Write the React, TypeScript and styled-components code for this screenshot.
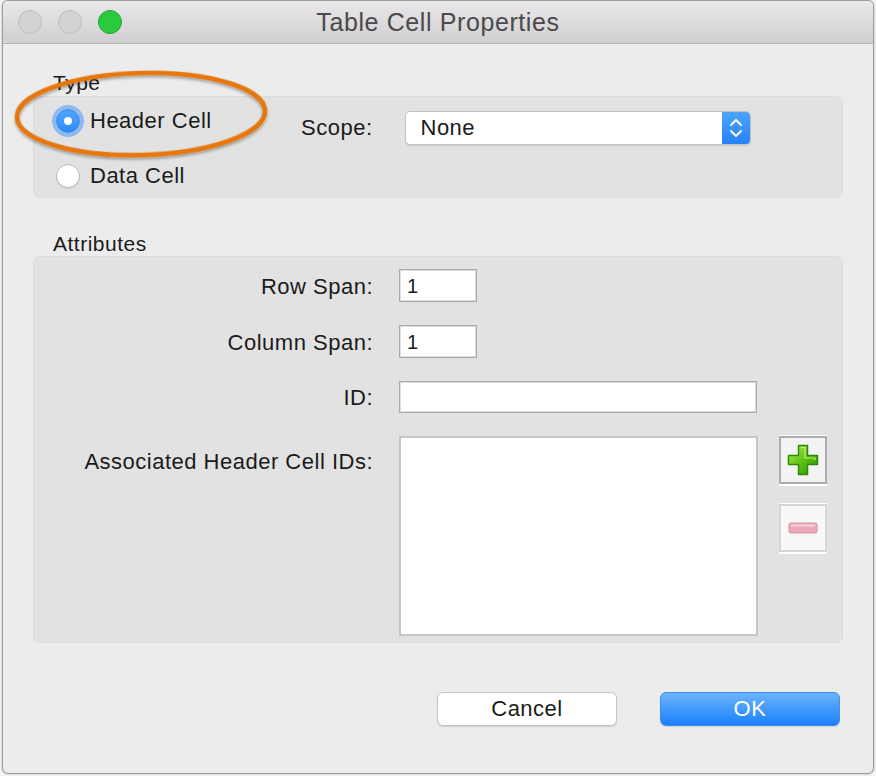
import React from "react";
import styled, { createGlobalStyle } from "styled-components";

const GlobalStyle = createGlobalStyle`
  html, body { margin: 0; padding: 0; background: #ffffff; }
  body { font-family: "Liberation Sans", Arial, sans-serif; color: #1b1b1b; }
  * { box-sizing: border-box; }
`;

const Page = styled.div`
  width: 876px;
  height: 776px;
  padding: 0 2px 2px 2px;
  background: #f4f4f4;
`;

const Window = styled.div`
  position: relative;
  width: 872px;
  height: 774px;
  background: #ececec;
  border: 1px solid #9c9c9c;
  border-radius: 6px;
  overflow: hidden;
  display: flex;
  flex-direction: column;
  box-shadow: 0 0 2px rgba(0, 0, 0, 0.35);
`;

const TitleBar = styled.div`
  height: 43px;
  flex: none;
  display: grid;
  grid-template-columns: 1fr auto 1fr;
  align-items: center;
  background: linear-gradient(#e9e7e9, #d1cfd1);
  border-bottom: 1px solid #b4b4b4;
`;

const Lights = styled.div`
  display: flex;
  gap: 16px;
  padding-left: 15px;
`;

const Light = styled.span<{ $color?: string; $edge?: string }>`
  width: 24px;
  height: 24px;
  border-radius: 50%;
  background: ${(p) => p.$color ?? "#d3d3d3"};
  border: 1px solid ${(p) => p.$edge ?? "#bdbdbd"};
`;

const Title = styled.div`
  font-size: 25px;
  color: #4a4a4a;
  letter-spacing: 0.6px;
`;

const Content = styled.div`
  flex: 1;
  display: flex;
  flex-direction: column;
  padding: 27px 30px 0 30px;
  font-size: 22px;
  letter-spacing: 0.5px;
`;

const SectionLabel = styled.div`
  font-size: 21px;
  line-height: 24px;
  padding-left: 20px;
  height: 24px;
`;

const GroupBox = styled.div`
  background: #e2e2e2;
  border: 1px solid #dbdbdb;
  border-radius: 7px;
`;

const TypeBox = styled(GroupBox)`
  margin-top: 1px;
  height: 102px;
  display: flex;
  padding: 7px 0 0 22px;
`;

const RadioColumn = styled.div`
  width: 245px;
  display: flex;
  flex-direction: column;
  gap: 21px;
`;

const RadioRow = styled.label`
  display: flex;
  align-items: center;
  height: 34px;
  gap: 10px;
`;

const Radio = styled.span<{ $on?: boolean }>`
  width: 24px;
  height: 24px;
  border-radius: 50%;
  display: flex;
  align-items: center;
  justify-content: center;
  background: ${(p) => (p.$on ? "linear-gradient(#4fa6fd, #2d8cfb)" : "#ffffff")};
  border: 1px solid ${(p) => (p.$on ? "#2f86f0" : "#b9b9b9")};
  box-shadow: ${(p) => (p.$on ? "0 0 0 4px rgba(76, 152, 245, 0.55)" : "0 1px 1px rgba(0,0,0,0.08)")};
`;

const Dot = styled.span`
  width: 8px;
  height: 8px;
  border-radius: 50%;
  background: #ffffff;
`;

const ScopeRow = styled.div`
  margin-top: 7px;
  height: 34px;
  display: flex;
  align-items: center;
  gap: 32px;
`;

const Label = styled.span`
  white-space: nowrap;
`;

const Select = styled.div`
  width: 346px;
  height: 34px;
  display: flex;
  background: #ffffff;
  border: 1px solid #c3c3c3;
  border-radius: 5px;
  box-shadow: 0 1px 1px rgba(0, 0, 0, 0.12);
  overflow: hidden;
`;

const SelectText = styled.span`
  flex: 1;
  line-height: 32px;
  padding-left: 15px;
`;

const SelectArrows = styled.span`
  width: 28px;
  display: flex;
  align-items: center;
  justify-content: center;
  background: linear-gradient(#4ea4fd, #2582f7);
`;

const AttrLabel = styled(SectionLabel)`
  margin-top: 34px;
`;

const AttrBox = styled(GroupBox)`
  height: 387px;
  padding: 12px 0 0 0;
  display: grid;
  grid-template-columns: 339px 358px 70px;
  column-gap: 26px;
  row-gap: 23px;
  grid-template-rows: 33px 33px 32px 200px;
  align-items: center;
`;

const FieldLabel = styled.span<{ $top?: boolean }>`
  text-align: right;
  white-space: nowrap;
  align-self: ${(p) => (p.$top ? "start" : "center")};
  padding-top: ${(p) => (p.$top ? "13px" : "2px")};
`;

const TextInput = styled.div<{ $w?: number; $h?: number }>`
  width: ${(p) => p.$w ?? 358}px;
  height: ${(p) => p.$h ?? 33}px;
  background: #ffffff;
  border: 1px solid #a9a9a9;
  box-shadow: inset 0 0 0 1px #dedede;
  font-size: 20px;
  line-height: 33px;
  padding-left: 7px;
  grid-column: 2;
`;

const ListBox = styled.div`
  width: 359px;
  height: 200px;
  background: #ffffff;
  border: 2px solid #c6c6c6;
  grid-column: 2;
  align-self: start;
`;

const ListButtons = styled.div`
  grid-column: 3;
  align-self: start;
  display: flex;
  flex-direction: column;
  gap: 20px;
  margin-left: -4px;
`;

const IconButton = styled.div<{ $muted?: boolean }>`
  width: 48px;
  height: 48px;
  display: flex;
  align-items: center;
  justify-content: center;
  background: ${(p) => (p.$muted ? "#f8f8f8" : "#f3f3f3")};
  border: 2px solid ${(p) => (p.$muted ? "#d6d6d6" : "#adadad")};
  box-shadow: 0 -1px 0 #ffffff, 0 1px 0 #ffffff, 0 2px 0 #ffffff;
`;

const Footer = styled.div`
  display: flex;
  justify-content: flex-end;
  gap: 43px;
  padding: 49px 3px 0 0;
`;

const Button = styled.div<{ $primary?: boolean }>`
  width: 180px;
  height: 34px;
  border-radius: 6px;
  display: flex;
  align-items: center;
  justify-content: center;
  color: ${(p) => (p.$primary ? "#ffffff" : "#1b1b1b")};
  background: ${(p) => (p.$primary ? "linear-gradient(#6db4fb, #1a80fb)" : "#ffffff")};
  border: 1px solid ${(p) => (p.$primary ? "#3f8ff0" : "#c4c4c4")};
  box-shadow: 0 1px 1px rgba(0, 0, 0, 0.12);
`;

const Annotation = styled.svg`
  position: absolute;
  left: 8px;
  top: 66px;
  pointer-events: none;
`;

function Chevrons() {
  return (
    <svg width="16" height="24" viewBox="0 0 16 24">
      <path d="M3 9 L8 4 L13 9" fill="none" stroke="#fff" strokeWidth="2" strokeLinecap="round" strokeLinejoin="round" />
      <path d="M3 15 L8 20 L13 15" fill="none" stroke="#fff" strokeWidth="2" strokeLinecap="round" strokeLinejoin="round" />
    </svg>
  );
}

function PlusIcon() {
  return (
    <svg width="32" height="32" viewBox="0 0 32 32">
      <defs>
        <linearGradient id="pg" x1="0" y1="0" x2="1" y2="1">
          <stop offset="0" stopColor="#b9f04a" />
          <stop offset="0.5" stopColor="#5cc214" />
          <stop offset="1" stopColor="#2f8f05" />
        </linearGradient>
      </defs>
      <path
        d="M11.5 1.5 H20.5 V11.5 H30.5 V20.5 H20.5 V30.5 H11.5 V20.5 H1.5 V11.5 H11.5 Z"
        fill="url(#pg)"
        stroke="#2e8a08"
        strokeWidth="1.5"
        strokeLinejoin="round"
      />
      <path d="M14 3.5 H18 V14 H28 V16" fill="none" stroke="#d9ff8a" strokeWidth="1.2" opacity="0.8" />
    </svg>
  );
}

function MinusIcon() {
  return (
    <svg width="32" height="14" viewBox="0 0 32 14">
      <rect x="2" y="2" width="28" height="10" rx="1.5" fill="#e9a9b8" stroke="#d592a2" strokeWidth="1" />
      <rect x="4" y="3.5" width="24" height="2" fill="#f6d3dc" />
    </svg>
  );
}

export default function App() {
  return (
    <>
      <GlobalStyle />
      <Page>
        <Window>
          <TitleBar>
            <Lights>
              <Light />
              <Light />
              <Light $color="#29c940" $edge="#1fab30" />
            </Lights>
            <Title>Table Cell Properties</Title>
            <span />
          </TitleBar>
          <Content>
            <SectionLabel>Type</SectionLabel>
            <TypeBox>
              <RadioColumn>
                <RadioRow>
                  <Radio $on>
                    <Dot />
                  </Radio>
                  Header Cell
                </RadioRow>
                <RadioRow>
                  <Radio />
                  Data Cell
                </RadioRow>
              </RadioColumn>
              <ScopeRow>
                <Label>Scope:</Label>
                <Select>
                  <SelectText>None</SelectText>
                  <SelectArrows>
                    <Chevrons />
                  </SelectArrows>
                </Select>
              </ScopeRow>
            </TypeBox>

            <AttrLabel>Attributes</AttrLabel>
            <AttrBox>
              <FieldLabel>Row Span:</FieldLabel>
              <TextInput $w={78}>1</TextInput>
              <span />
              <FieldLabel>Column Span:</FieldLabel>
              <TextInput $w={78}>1</TextInput>
              <span />
              <FieldLabel>ID:</FieldLabel>
              <TextInput $h={32} />
              <span />
              <FieldLabel $top>Associated Header Cell IDs:</FieldLabel>
              <ListBox />
              <ListButtons>
                <IconButton>
                  <PlusIcon />
                </IconButton>
                <IconButton $muted>
                  <MinusIcon />
                </IconButton>
              </ListButtons>
            </AttrBox>

            <Footer>
              <Button>Cancel</Button>
              <Button $primary>OK</Button>
            </Footer>
          </Content>
          <Annotation width="264" height="100" viewBox="0 0 264 100">
            <defs>
              <filter id="sh" x="-10%" y="-20%" width="120%" height="140%">
                <feDropShadow dx="0" dy="2" stdDeviation="1.5" floodColor="#000" floodOpacity="0.35" />
              </filter>
            </defs>
            <ellipse
              cx="130"
              cy="47"
              rx="124"
              ry="41"
              transform="rotate(-1.5 130 47)"
              fill="none"
              stroke="#e5770e"
              strokeWidth="4.5"
              filter="url(#sh)"
            />
          </Annotation>
        </Window>
      </Page>
    </>
  );
}
